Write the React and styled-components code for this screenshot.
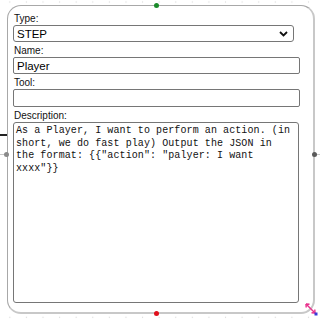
import React from 'react'
import styled, { createGlobalStyle } from 'styled-components'

const GlobalStyle = createGlobalStyle`
  html, body {
    margin: 0;
    padding: 0;
    background: #ffffff;
  }
  body {
    font-family: "Liberation Sans", Arial, sans-serif;
  }
`;

const Canvas = styled.div`
  position: relative;
  width: 320px;
  height: 319px;
  box-sizing: border-box;
  padding: 5px 5px 5px 7px;
  background-color: #ffffff;
  background-image: radial-gradient(circle, #d8d8d8 0.7px, transparent 1px);
  background-size: 16.6px 16.6px;
  background-position: 1.5px -6.3px;
  overflow: hidden;
`;

const Node = styled.div`
  position: relative;
  width: 308px;
  height: 309px;
  box-sizing: border-box;
  border: 1px solid #a8a8a8;
  border-right: 2px solid #c8c8c8;
  border-bottom: 2px solid #c8c8c8;
  border-radius: 14px;
  background: #ffffff;
  padding: 6px 14px 9px 5px;
  display: flex;
  flex-direction: column;
`;

const Label = styled.label`
  display: block;
  font-size: 10px;
  line-height: 13px;
  color: #111;
  margin-top: ${p => (p.first ? '0' : '2px')};
  padding-left: 1px;
`;

const SelectBox = styled.div`
  position: relative;
  width: 281px;
  height: 17px;
  box-sizing: border-box;
  border: 1px solid #767676;
  border-radius: 3px;
  display: flex;
  align-items: center;
  justify-content: space-between;
  padding: 0 5px 0 3px;
  font-size: 11.5px;
  color: #000;
`;

const Field = styled.div`
  width: 287px;
  height: ${p => p.h}px;
  box-sizing: border-box;
  border: 1px solid #767676;
  border-radius: 2px;
  display: flex;
  align-items: center;
  padding-left: 3px;
  font-size: 11.5px;
  color: #000;
`;

const TextArea = styled.div`
  flex: 1;
  width: 286px;
  box-sizing: border-box;
  border: 1px solid #767676;
  border-radius: 3px;
  padding: 2px 7px 2px 2px;
  font-family: "Liberation Mono", "DejaVu Sans Mono", monospace;
  font-size: 10px;
  letter-spacing: 0.09px;
  line-height: 12.5px;
  color: #111;
  word-wrap: break-word;
`;

const Dot = styled.div`
  position: absolute;
  width: ${p => p.size}px;
  height: ${p => p.size}px;
  border-radius: 50%;
  background: ${p => p.color};
`;

const Wire = styled.div`
  position: absolute;
  height: ${p => p.h || 1}px;
  background: ${p => p.color};
`;

const Corner = styled.svg`
  position: absolute;
  right: 2px;
  bottom: 3px;
`;

export default function App() {
  return (
    <>
      <GlobalStyle />
      <Canvas>
        <Wire color="#222" h={1.5} style={{ left: 0, top: 134, width: 8 }} />
        <Wire color="#c8c8c8" h={1} style={{ left: 0, top: 154, width: 6 }} />
        <Wire color="#c8c8c8" h={1} style={{ left: 315, top: 154, width: 6 }} />
        <Node>
          <Label first>Type:</Label>
          <SelectBox>
            STEP
            <svg width="9" height="6" viewBox="0 0 9 6">
              <path d="M1 1 L4.5 4.5 L8 1" fill="none" stroke="#111" strokeWidth="1.8" />
            </svg>
          </SelectBox>
          <Label>Name:</Label>
          <Field h={17}>Player</Field>
          <Label>Tool:</Label>
          <Field h={18} />
          <Label>Description:</Label>
          <TextArea>
            As a Player, I want to perform an action. (in short, we do fast play) Output the JSON in the format: {'{{'}"action": "palyer: I want xxxx"{'}}'}
          </TextArea>
        </Node>
        <Dot color="#1a8a2a" size={5} style={{ left: 154, top: 3 }} />
        <Dot color="#e0101c" size={5} style={{ left: 154, top: 311 }} />
        <Dot color="#8a8a8a" size={5} style={{ left: 4, top: 152 }} />
        <Dot color="#5a5a5a" size={5} style={{ left: 312, top: 152 }} />
        <Corner width="14" height="14" viewBox="0 0 14 14">
          <path d="M2 2 L11 11" stroke="#e8308c" strokeWidth="1.4" />
          <path d="M2 2 L5.5 2.2 M2 2 L2.2 5.5" stroke="#e8308c" strokeWidth="1.4" fill="none" />
          <path d="M11 11 L7.5 10.8 M11 11 L10.8 7.5" stroke="#e8308c" strokeWidth="1.4" fill="none" />
          <rect x="10.5" y="10.5" width="3" height="3" fill="#3a3ad8" />
        </Corner>
      </Canvas>
    </>
  )
}
